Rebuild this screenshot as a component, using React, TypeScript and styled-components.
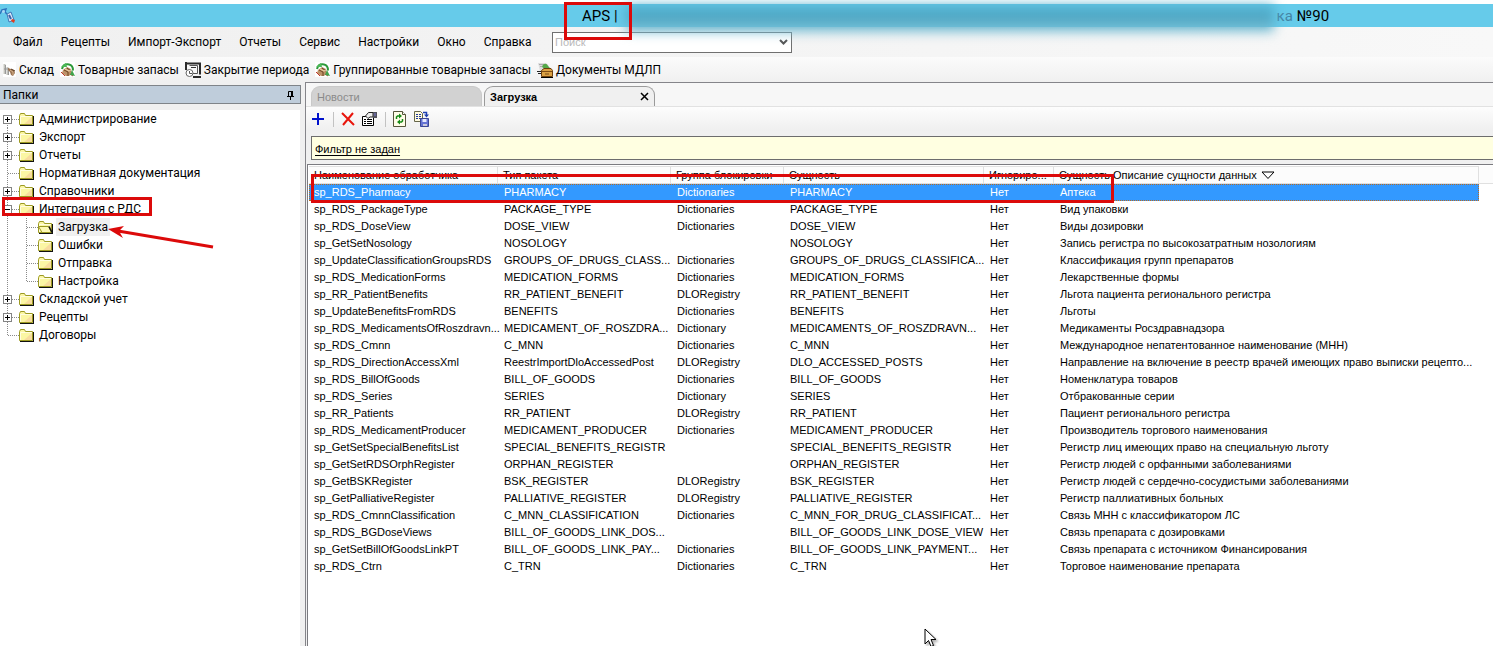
import React from 'react';
import styled, { createGlobalStyle, css } from 'styled-components';

const uiFont = 'Roboto, "Open Sans", sans-serif';
const gridFont = '"Liberation Sans", Arial, sans-serif';
const red = '#dc0a0a';

const GlobalStyle = createGlobalStyle`
  * { box-sizing: border-box; }
  html, body, #root { height: 100%; }
  body { margin: 0; background: #f0f0f0; color: #000; font: 12px/18px ${uiFont}; overflow: hidden; }
  button { font: inherit; color: inherit; background: none; border: 0; padding: 0; white-space: nowrap; }
  svg { display: block; flex: none; }
`;

const Window = styled.div`
  display: flex;
  flex-direction: column;
  min-height: 100vh;
`;

const TitleBar = styled.header`
  position: relative;
  display: flex;
  align-items: center;
  height: 27px;
  border-top: 4px solid #fff;
  background: #66cbea;
  font-size: 15px;
  line-height: 22px;
  white-space: nowrap;
`;
const AppIcon = styled.div`
  width: 582px;
`;
const TitleGap = styled.span`
  width: 659px;
`;
const FadedText = styled.span`
  color: #4585a5;
  margin-right: 4px;
`;
const Haze = styled.div`
  position: absolute;
  z-index: 2;
  left: 626px;
  top: 1px;
  width: 648px;
  height: 27px;
  background: linear-gradient(#55b4d3, #4ba3c0 50%, #8ccadd);
  filter: blur(6px);
`;
const Mark = styled.div<{ $x: number; $y: number; $w: number; $h: number }>`
  position: absolute;
  z-index: 3;
  left: ${(p) => p.$x}px;
  top: ${(p) => p.$y}px;
  width: ${(p) => p.$w}px;
  height: ${(p) => p.$h}px;
  border: 3px solid ${red};
  pointer-events: none;
`;

const MenuBar = styled.nav`
  display: flex;
  align-items: center;
  height: 30px;
  padding-left: 13px;
  background: linear-gradient(90deg, #f0f0f0, #f8f8f8);
`;
const MenuItems = styled.div`
  display: flex;
  gap: 18px;
  width: 539px;
`;
const SearchBox = styled.div`
  display: flex;
  align-items: center;
  width: 240px;
  height: 21px;
  padding: 0 3px 0 2px;
  border: 1px solid #707070;
  background: #fff;
`;
const SearchInput = styled.input`
  flex: 1;
  min-width: 0;
  padding: 0;
  border: 0;
  outline: 0;
  background: none;
  font: 11px/18px ${gridFont};
  &::placeholder { color: #b9b9b9; }
`;

const ToolBar = styled.div`
  display: flex;
  align-items: center;
  gap: 6px;
  height: 25px;
  padding-left: 3px;
  background: linear-gradient(#fbfbfb, #f0f0f0);
`;
const ToolButton = styled.button`
  display: flex;
  align-items: center;
  gap: 3px;
`;

const Body = styled.div`
  display: flex;
  flex: 1;
`;
const Sidebar = styled.aside`
  display: flex;
  flex-direction: column;
  width: 305px;
  flex: none;
  padding: 3px 4px 0 0;
`;
const PanelTitle = styled.div`
  display: flex;
  align-items: center;
  justify-content: space-between;
  height: 19px;
  margin-bottom: 6px;
  padding: 0 5px 0 3px;
  border: 1px solid #7f8489;
  border-left: 0;
  background: #bfcddb;
`;
const Tree = styled.ul`
  flex: 1;
  margin: 0 1px 0 0;
  padding: 0;
  list-style: none;
  background: #fff;
`;
const Branch = styled.ul`
  margin: 0;
  padding: 0;
  list-style: none;
`;
const TreeRow = styled.div`
  position: relative;
  display: flex;
  align-items: center;
  height: 18px;
`;
const TreeButton = styled.button<{ $selected?: boolean }>`
  height: 18px;
  margin-left: 2px;
  padding: 0 2px;
  ${(p) => p.$selected && css`background: #f0f0f0;`}
`;
const Arrow = styled.svg`
  position: absolute;
  left: 106px;
  top: 0;
  z-index: 3;
`;

const Main = styled.main`
  flex: 1;
  min-width: 0;
  display: flex;
  flex-direction: column;
  border-top: 1px solid #85858a;
  border-left: 1px solid #85858a;
  background: #f0f0f0;
`;
const Tabs = styled.div`
  display: flex;
  align-items: flex-end;
  gap: 2px;
  height: 23px;
  padding-left: 5px;
  background: #f7f7f7;
  font: 11px/16px ${gridFont};
`;
const Tab = styled.div<{ $active?: boolean }>`
  display: flex;
  align-items: center;
  justify-content: space-between;
  width: 171px;
  height: 20px;
  padding: 0 5px;
  border: 1px solid ${(p) => (p.$active ? '#9a9a9a' : '#c9c9c9')};
  border-bottom: 0;
  border-radius: 9px 9px 0 0;
  background: ${(p) => (p.$active ? '#f0f0f0' : '#d2d2d2')};
  color: ${(p) => (p.$active ? '#000' : '#8a8a8a')};
  font-weight: ${(p) => (p.$active ? 700 : 400)};
`;
const ActionBar = styled.div`
  display: flex;
  align-items: center;
  gap: 5px;
  height: 25px;
  padding-left: 4px;
  border-top: 1px solid #e2e2e2;
  background: linear-gradient(#fdfdfd, #efefef);
`;
const Divider = styled.span`
  width: 1px;
  height: 15px;
  margin: 0 1px 0 2px;
  background: #c2c2c2;
`;
const FilterBar = styled.div`
  display: flex;
  align-items: center;
  height: 24px;
  margin: 5px 0 4px 5px;
  padding: 2px 0 0 3px;
  border: 1px solid #6d6d6d;
  border-right: 0;
  background: #ffffe1;
  font: 11px/16px ${gridFont};
`;
const FilterLink = styled.a`
  color: #000;
  text-decoration: underline;
  text-underline-offset: 2px;
`;

const Grid = styled.div`
  position: relative;
  flex: 1;
  margin-left: 1px;
  padding-left: 1px;
  border-top: 1px solid #7b7b80;
  border-left: 1px solid #7b7b80;
  background: #fff;
`;
const HeadFill = styled.div`
  margin-top: 1px;
  padding-right: 14px;
  background:
    linear-gradient(#e0e0e0, #e0e0e0) 0 17px / 100% 1px no-repeat,
    linear-gradient(#fcfcfc, #fcfcfc) 0 0 / 100% 17px no-repeat;
`;
const Table = styled.table`
  width: 100%;
  table-layout: fixed;
  border-collapse: separate;
  border-spacing: 0;
  font: 11px/15px ${gridFont};
  white-space: nowrap;
`;
const Head = styled.th`
  height: 18px;
  padding: 0 2px 0 5px;
  overflow: hidden;
  border: 1px solid #e0e0e0;
  border-left: 0;
  text-align: left;
  font-weight: 400;
`;
const SortHead = styled.span`
  display: flex;
  align-items: center;
  gap: 4px;
`;
const Row = styled.tr<{ $selected?: boolean }>`
  ${(p) => p.$selected && css`
    background: #3399ff;
    color: #fff;
    outline: 1px dotted #b96a20;
    outline-offset: -1px;
  `}
`;
const Cell = styled.td`
  height: 17px;
  padding: 0 0 0 6px;
  &:first-child { padding-left: 5px; }
`;
const Pointer = styled.svg`
  position: absolute;
  left: 616px;
  top: 463px;
  filter: drop-shadow(2px 2px 1px rgba(0, 0, 0, 0.3));
`;

const SmallIcon = ({ kind }: { kind: string }) => {
  if (kind === 'store')
    return (
      <svg width="13" height="16" viewBox="0 0 13 16">
        <path d="M0 0h13v15H0z" fill="#fff" />
        <path d="M1.500 2v10M4.500 5v8" stroke="#c4c4bd" strokeWidth="2" />
        <path d="M2.500 3v9M5.500 6v7M1 7h4" stroke="#999" />
        <path d="M5 6l3 1 3 1 1 3-2 3-2-1-1-3-2-2z" fill="#9b7453" />
        <path d="M7 8l3 2v3" stroke="#d9b58c" fill="none" />
        <path d="M8 7l4 2" stroke="#5a3a20" />
      </svg>
    );
  if (kind === 'period')
    return (
      <svg width="16" height="16" viewBox="0 0 16 16">
        <path d="M1 0v8M2 1.500h13v11M8 15h8" stroke="#2a2a2a" fill="none" strokeWidth="2" />
        <path d="M4.500 3.500h8v8H8" fill="#f8f8f8" stroke="#555" />
        <path d="M6 5.500h5" stroke="#333" />
        <circle cx="4.500" cy="11" r="3.500" fill="#fff" stroke="#666" />
        <path d="M4.500 9v2.500H7" stroke="#555" fill="none" />
      </svg>
    );
  if (kind === 'docs')
    return (
      <svg width="16" height="16" viewBox="0 0 16 16">
        <path d="M1 1h8l3 3v5H3z" fill="#dcdcdc" />
        <path d="M2 2.500h5M3 4.500h2" stroke="#aaa" />
        <path d="M5 5c1-4 5-4 6-1l2 2-5 1z" fill="#53a848" />
        <path d="M0 9.500h4M1 11.500h3" stroke="#222" fill="none" />
        <path d="M4.500 8.500L7 6.500h7l1.500 2v6h-11z" fill="#dba143" stroke="#6b3d0c" />
        <path d="M5 9.500h10M8 12h4" stroke="#7b4a16" />
        <path d="M4 15.500h12" stroke="#000" />
      </svg>
    );
  return (
    <svg width="15" height="16" viewBox="0 0 15 16">
      <path d="M0 0h15v15H0z" fill="#fff" />
      <path d="M2 7c1-4 4-5 7-4.500 3 .5 4 3 4 6" stroke="#2d9a3a" strokeWidth="2" fill="none" />
      <path d="M1 5l5-4 1 4z" fill="#4cba58" />
      <path d="M3 8l4-3 4 2 1 4-3 3-3 0-4-3z" fill="#bd9268" />
      <path d="M4 8l4 2v4M7 6l4 3" stroke="#6c4322" fill="none" />
      <path d="M5 7l4 2 2-1" stroke="#f1d6ac" fill="none" />
      <path d="M1 10l4 4M10 12l3 2" stroke="#c0392b" />
      <path d="M12 8l3 6-5-1z" fill="#3fa44b" />
    </svg>
  );
};

const Folder = ({ open }: { open?: boolean }) => (
  <svg width="16" height="14" viewBox="0 0 16 14">
    <path d="M0.500 12.500V3.500l1-2h4l1 2h7v9z" fill="#fbf6a4" stroke="#9c9a22" />
    <path d="M1.500 12V4.500H13" stroke="#fffde0" fill="none" />
    <path d="M13 5v7H5z" fill="#f7dc9e" />
    <path d="M1 13.500h14M14.500 4v10" stroke="#111" />
    {open && (
      <>
        <path d="M0.500 6.500h10l3 6H4z" fill="#fdf9b4" stroke="#9c9a22" />
        <path d="M11 6.500l3 6" stroke="#111" strokeWidth="1.500" />
      </>
    )}
  </svg>
);

type NodeKind = 'plus' | 'minus' | 'leaf';
const Guides = ({ kind, first, last }: { kind: NodeKind; first?: boolean; last?: boolean }) => (
  <svg width="19" height="18" viewBox="0 0 19 18">
    <path d={`M7.500 ${first ? 9 : 0}V${last ? 9 : 18}M8 9.500h11`} stroke="#8a8a8a" strokeDasharray="1 1" />
    {kind !== 'leaf' && (
      <>
        <rect x="3.500" y="5.500" width="8" height="8" fill="#fff" stroke="#848484" />
        <path d={kind === 'plus' ? 'M5 9.500h5M7.500 7v5' : 'M5 9.500h5'} stroke="#000" />
      </>
    )}
  </svg>
);
const ChildGuides = ({ last }: { last?: boolean }) => (
  <svg width="38" height="18" viewBox="0 0 38 18">
    <path d={`M7.500 0V18M26.500 0V${last ? 9 : 18}M27 9.500h11`} stroke="#8a8a8a" strokeDasharray="1 1" />
  </svg>
);

const menu = ['Файл', 'Рецепты', 'Импорт-Экспорт', 'Отчеты', 'Сервис', 'Настройки', 'Окно', 'Справка'];
const tools = [
  ['store', 'Склад'],
  ['goods', 'Товарные запасы'],
  ['period', 'Закрытие периода'],
  ['goods', 'Группированные товарные запасы'],
  ['docs', 'Документы МДЛП'],
];
const tree: { label: string; kind: NodeKind; marked?: boolean; children?: string[] }[] = [
  { label: 'Администрирование', kind: 'plus' },
  { label: 'Экспорт', kind: 'plus' },
  { label: 'Отчеты', kind: 'plus' },
  { label: 'Нормативная документация', kind: 'leaf' },
  { label: 'Справочники', kind: 'plus' },
  { label: 'Интеграция с РДС', kind: 'minus', marked: true, children: ['Загрузка', 'Ошибки', 'Отправка', 'Настройка'] },
  { label: 'Складской учет', kind: 'plus' },
  { label: 'Рецепты', kind: 'plus' },
  { label: 'Договоры', kind: 'leaf' },
];
const columns: [string, number | undefined][] = [
  ['Наименование обработчика', 189],
  ['Тип пакета', 173],
  ['Группа блокировки', 113],
  ['Сущность', 200],
  ['Игнориро...', 70],
  ['Сущность.Описание сущности данных', undefined],
];
const D = 'Dictionaries';
const rows = [
  ['sp_RDS_Pharmacy', 'PHARMACY', D, 'PHARMACY', 'Аптека'],
  ['sp_RDS_PackageType', 'PACKAGE_TYPE', D, 'PACKAGE_TYPE', 'Вид упаковки'],
  ['sp_RDS_DoseView', 'DOSE_VIEW', D, 'DOSE_VIEW', 'Виды дозировки'],
  ['sp_GetSetNosology', 'NOSOLOGY', '', 'NOSOLOGY', 'Запись регистра по высокозатратным нозологиям'],
  ['sp_UpdateClassificationGroupsRDS', 'GROUPS_OF_DRUGS_CLASS...', D, 'GROUPS_OF_DRUGS_CLASSIFICA...', 'Классификация групп препаратов'],
  ['sp_RDS_MedicationForms', 'MEDICATION_FORMS', D, 'MEDICATION_FORMS', 'Лекарственные формы'],
  ['sp_RR_PatientBenefits', 'RR_PATIENT_BENEFIT', 'DLORegistry', 'RR_PATIENT_BENEFIT', 'Льгота пациента регионального регистра'],
  ['sp_UpdateBenefitsFromRDS', 'BENEFITS', D, 'BENEFITS', 'Льготы'],
  ['sp_RDS_MedicamentsOfRoszdravn...', 'MEDICAMENT_OF_ROSZDRA...', 'Dictionary', 'MEDICAMENTS_OF_ROSZDRAVN...', 'Медикаменты Росздравнадзора'],
  ['sp_RDS_Cmnn', 'C_MNN', D, 'C_MNN', 'Международное непатентованное наименование (МНН)'],
  ['sp_RDS_DirectionAccessXml', 'ReestrImportDloAccessedPost', 'DLORegistry', 'DLO_ACCESSED_POSTS', 'Направление на включение в реестр врачей имеющих право выписки рецепто...'],
  ['sp_RDS_BillOfGoods', 'BILL_OF_GOODS', D, 'BILL_OF_GOODS', 'Номенклатура товаров'],
  ['sp_RDS_Series', 'SERIES', 'Dictionary', 'SERIES', 'Отбракованные серии'],
  ['sp_RR_Patients', 'RR_PATIENT', 'DLORegistry', 'RR_PATIENT', 'Пациент регионального регистра'],
  ['sp_RDS_MedicamentProducer', 'MEDICAMENT_PRODUCER', D, 'MEDICAMENT_PRODUCER', 'Производитель торгового наименования'],
  ['sp_GetSetSpecialBenefitsList', 'SPECIAL_BENEFITS_REGISTR', '', 'SPECIAL_BENEFITS_REGISTR', 'Регистр лиц имеющих право на специальную льготу'],
  ['sp_GetSetRDSOrphRegister', 'ORPHAN_REGISTER', '', 'ORPHAN_REGISTER', 'Регистр людей с орфанными заболеваниями'],
  ['sp_GetBSKRegister', 'BSK_REGISTER', 'DLORegistry', 'BSK_REGISTER', 'Регистр людей с сердечно-сосудистыми заболеваниями'],
  ['sp_GetPalliativeRegister', 'PALLIATIVE_REGISTER', 'DLORegistry', 'PALLIATIVE_REGISTER', 'Регистр паллиативных больных'],
  ['sp_RDS_CmnnClassification', 'C_MNN_CLASSIFICATION', D, 'C_MNN_FOR_DRUG_CLASSIFICAT...', 'Связь МНН с классификатором ЛС'],
  ['sp_RDS_BGDoseViews', 'BILL_OF_GOODS_LINK_DOS...', '', 'BILL_OF_GOODS_LINK_DOSE_VIEW', 'Связь препарата с дозировками'],
  ['sp_GetSetBillOfGoodsLinkPT', 'BILL_OF_GOODS_LINK_PAY...', D, 'BILL_OF_GOODS_LINK_PAYMENT...', 'Связь препарата с источником Финансирования'],
  ['sp_RDS_Ctrn', 'C_TRN', D, 'C_TRN', 'Торговое наименование препарата'],
];

export default function App() {
  return (
    <Window>
      <GlobalStyle />
      <TitleBar>
        <AppIcon>
          <svg width="16" height="16" viewBox="0 0 16 16">
            <path d="M0 6l2-4 4-1-1 3 2 2" stroke="#2f74bd" strokeWidth="1.500" fill="none" />
            <circle cx="3.500" cy="3.500" r="1.500" fill="#a9d6f5" />
            <path d="M7 6l4-2 3 8-5 2z" fill="#dbe9f7" stroke="#3e78b8" />
            <path d="M9 7l2 4" stroke="#3a62a8" strokeWidth="2" />
            <path d="M12 11l3 1-1 3-3-2z" fill="#e23d1d" />
          </svg>
        </AppIcon>
        APS |
        <TitleGap />
        <FadedText>ка</FadedText>№90
        <Haze />
        <Mark $x={564} $y={-2} $w={68} $h={38} />
      </TitleBar>
      <MenuBar>
        <MenuItems>
          {menu.map((m) => (
            <button key={m}>{m}</button>
          ))}
        </MenuItems>
        <SearchBox>
          <SearchInput aria-label="Поиск" placeholder="Поиск" />
          <svg width="9" height="6" viewBox="0 0 9 6">
            <path d="M1 1l3.500 3.500L8 1" stroke="#555" strokeWidth="2" fill="none" />
          </svg>
        </SearchBox>
      </MenuBar>
      <ToolBar>
        {tools.map(([kind, label]) => (
          <ToolButton key={label}>
            <SmallIcon kind={kind} />
            {label}
          </ToolButton>
        ))}
      </ToolBar>
      <Body>
        <Sidebar>
          <PanelTitle>
            Папки
            <button aria-label="Закрепить">
              <svg width="9" height="10" viewBox="0 0 9 10">
                <path d="M2.500 6V1.500h4V6M1 6.500h7M4.500 7v3" stroke="#000" fill="none" />
                <path d="M6 1v5" stroke="#000" strokeWidth="2" />
              </svg>
            </button>
          </PanelTitle>
          <Tree>
            {tree.map((node, i) => (
              <li key={node.label}>
                <TreeRow>
                  <Guides kind={node.kind} first={i === 0} last={i === tree.length - 1} />
                  <Folder />
                  <TreeButton>{node.label}</TreeButton>
                  {node.marked && <Mark $x={2} $y={-3} $w={150} $h={19} />}
                </TreeRow>
                {node.children && (
                  <Branch>
                    {node.children.map((child, j) => (
                      <li key={child}>
                        <TreeRow>
                          <ChildGuides last={j === 3} />
                          <Folder open={j === 0} />
                          <TreeButton $selected={j === 0}>{child}</TreeButton>
                          {j === 0 && (
                            <Arrow width="110" height="36" viewBox="0 0 110 36">
                              <path d="M12 13L107 29" stroke={red} strokeWidth="3" />
                              <path d="M2 11l16-3-5 5 4 7z" fill={red} />
                            </Arrow>
                          )}
                        </TreeRow>
                      </li>
                    ))}
                  </Branch>
                )}
              </li>
            ))}
          </Tree>
        </Sidebar>
        <Main>
          <Tabs>
            <Tab>Новости</Tab>
            <Tab $active>
              Загрузка
              <button aria-label="Закрыть">
                <svg width="9" height="9" viewBox="0 0 9 9">
                  <path d="M1 1l7 7M8 1L1 8" stroke="#000" strokeWidth="1.500" />
                </svg>
              </button>
            </Tab>
          </Tabs>
          <ActionBar>
            <button aria-label="Добавить">
              <svg width="16" height="16" viewBox="0 0 16 16">
                <path d="M8 2v12M2 8h12" stroke="#0011cc" strokeWidth="2" />
              </svg>
            </button>
            <Divider />
            <button aria-label="Удалить">
              <svg width="16" height="16" viewBox="0 0 16 16">
                <path d="M2 2l12 12M13 2L3 14" stroke="#e8150c" strokeWidth="2" />
              </svg>
            </button>
            <button aria-label="Свойства">
              <svg width="17" height="16" viewBox="0 0 17 16">
                <path d="M1.500 5.500h11v9h-11z" fill="#fff" stroke="#000" />
                <path d="M3 8.500h2M6 8.500h5M3 10.500h2M6 10.500h5M3 12.500h2M6 12.500h5" stroke="#000" />
                <path d="M4.500 5l3-3.500H12V6H9L7 7.500z" fill="#eee" stroke="#222" />
                <path d="M12 1h4v6h-4z" fill="#52525c" />
                <path d="M14 2v3" stroke="#7a7ad0" />
              </svg>
            </button>
            <Divider />
            <button aria-label="Обновить">
              <svg width="16" height="16" viewBox="0 0 16 16">
                <path d="M1.500 0.500h9l3 3v12h-12z" fill="#fffde8" stroke="#55553a" />
                <path d="M10.500 0.500v3h3" fill="#fff" stroke="#55553a" />
                <path d="M4.500 8V6l1-1H7M10.500 8v2l-1 1H8" stroke="#148a14" strokeWidth="1.500" fill="none" />
                <path d="M7 2.500l3 2.500-3 2.500zM8 8.500l-3 2.500 3 2.500z" fill="#148a14" />
              </svg>
            </button>
            <button aria-label="Сохранить">
              <svg width="17" height="16" viewBox="0 0 17 16">
                <path d="M1.500 0.500h6l2 2v8h-8z" fill="#fffbe0" stroke="#66664a" />
                <path d="M3 3.500h2M6 3.500h2M3 5.500h2M6 5.500h2M3 7.500h2M6 7.500h2" stroke="#223a9a" />
                <path d="M10 1.500h3.500V4" stroke="#1f3fb0" strokeWidth="1.500" fill="none" />
                <path d="M11 3.500h5l-2.500 3z" fill="#1f3fb0" />
                <path d="M7.500 7.500h8v8h-8z" fill="#6674d4" stroke="#3c4796" />
                <path d="M9.500 8h4v3h-4z" fill="#e9ecff" />
                <path d="M10 13h4v2h-4z" fill="#ccd" />
              </svg>
            </button>
          </ActionBar>
          <FilterBar>
            <FilterLink href="#filter">Фильтр не задан</FilterLink>
          </FilterBar>
          <Grid>
            <HeadFill>
              <Table>
                <colgroup>
                  {columns.map(([name, width]) => (
                    <col key={name} width={width} />
                  ))}
                </colgroup>
                <thead>
                  <tr>
                    {columns.map(([name], i) => (
                      <Head key={name} scope="col">
                        {i < 5 ? (
                          name
                        ) : (
                          <SortHead>
                            {name}
                            <svg width="14" height="9" viewBox="0 0 14 9">
                              <path d="M1 1h12L7 7.500z" stroke="#000" fill="#fff" />
                            </svg>
                          </SortHead>
                        )}
                      </Head>
                    ))}
                  </tr>
                </thead>
                <tbody>
                  {rows.map((r, i) => (
                    <Row key={r[0]} $selected={i === 0}>
                      {[r[0], r[1], r[2], r[3], 'Нет', r[4]].map((value, c) => (
                        <Cell key={c}>{value}</Cell>
                      ))}
                    </Row>
                  ))}
                </tbody>
              </Table>
            </HeadFill>
            <Mark $x={3} $y={9} $w={803} $h={29} />
            <Pointer width="14" height="20" viewBox="0 0 14 20">
              <path d="M1 1v15l3.500-3.500 2.500 6 2.500-1-2.500-6h5z" fill="#fff" stroke="#000" />
            </Pointer>
          </Grid>
        </Main>
      </Body>
    </Window>
  );
}
